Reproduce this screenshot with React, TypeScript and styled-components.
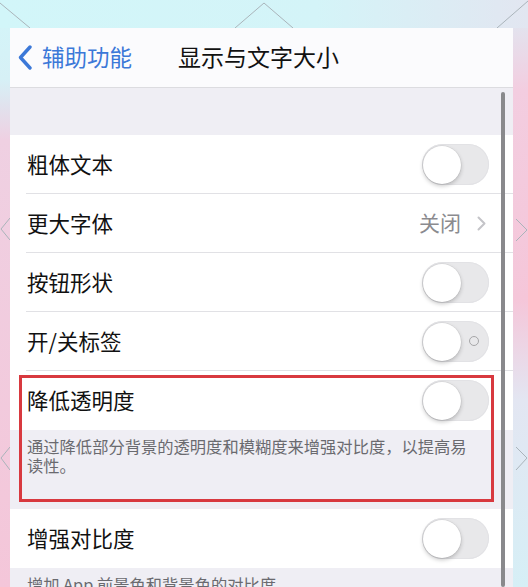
import React, { FC } from "react";
import styled, { createGlobalStyle } from "styled-components";

const GlobalStyle = createGlobalStyle`
  html, body {
    margin: 0;
    padding: 0;
  }
  body {
    font-family: "Noto Sans CJK SC", "Noto Sans", sans-serif;
  }
`;

const Page = styled.div`
  position: relative;
  width: 528px;
  height: 587px;
  overflow: hidden;
  box-sizing: border-box;
  padding: 28px 15px 0 10px;
  display: flex;
  background-color: #f4c8da;
  background-image: linear-gradient(
      180deg,
      #dcecf4 0px,
      #f3cde0 90px,
      #f5c6d9 300px,
      #e3e6f2 400px,
      #d6eff6 587px
    ),
    linear-gradient(
      180deg,
      #d3f6f9 0px,
      #d6f0f6 80px,
      #efd0e2 140px,
      #f4c6d9 587px
    );
  background-size: 20px 100%, 100% 100%;
  background-position: right top, left top;
  background-repeat: no-repeat;
`;

const TopBand = styled.div`
  position: absolute;
  left: 0;
  right: 0;
  top: 0;
  height: 28px;
  background: linear-gradient(90deg, #d2f6f9 0%, #d4f4f8 60%, #e2e6f1 100%);
`;

const Decor = styled.svg`
  position: absolute;
  inset: 0;
  pointer-events: none;
`;

const Screen = styled.div`
  position: relative;
  z-index: 1;
  flex: 1;
  display: flex;
  flex-direction: column;
  background: #efeef4;
  overflow: hidden;
`;

const NavBar = styled.div`
  height: 59px;
  flex-shrink: 0;
  display: flex;
  align-items: center;
  padding-left: 8px;
  background: #fbfbfd;
  border-bottom: 1px solid #dcdce0;
`;

const BackButton = styled.div`
  display: flex;
  align-items: center;
  gap: 10px;
  color: #3b78d8;
  font-size: 22.5px;
  span {
    margin-bottom: 3px;
  }
`;

const NavTitle = styled.div`
  margin-left: 46px;
  margin-bottom: 3px;
  font-size: 23px;
  color: #111;
`;

const SectionGap = styled.div<{ $h: number }>`
  height: ${(p) => p.$h}px;
  flex-shrink: 0;
`;

const Row = styled.div<{ $last?: boolean }>`
  position: relative;
  height: 59px;
  flex-shrink: 0;
  display: flex;
  align-items: center;
  justify-content: space-between;
  padding: 0 24px 0 17px;
  background: #fff;
  &::after {
    content: "";
    display: ${(p) => (p.$last ? "none" : "block")};
    position: absolute;
    left: 16px;
    right: 0;
    bottom: 0;
    height: 1px;
    background: #e1e1e5;
  }
`;

const Label = styled.span`
  font-size: 21.5px;
  color: #111;
  margin-bottom: 3px;
`;

const Value = styled.div`
  display: flex;
  align-items: center;
  gap: 16px;
  color: #8b8b8f;
  font-size: 21px;
  margin-right: 3px;
  span {
    margin-bottom: 3px;
  }
`;

const Track = styled.div`
  position: relative;
  width: 67px;
  height: 41px;
  border-radius: 21px;
  background: #e8e8ea;
  box-shadow: inset 0 0 0 1px #e2e2e5;
`;

const Knob = styled.div`
  position: absolute;
  left: 1px;
  top: 1.5px;
  width: 38px;
  height: 38px;
  border-radius: 50%;
  background: #fff;
  box-shadow: 0 2px 4px rgba(0, 0, 0, 0.22), 0 0 0 0.5px rgba(0, 0, 0, 0.08);
`;

const OffMark = styled.div`
  position: absolute;
  left: 47px;
  top: 15px;
  width: 8px;
  height: 8px;
  border-radius: 50%;
  border: 1.5px solid #a6a6a8;
`;

const Footer = styled.div<{ $h: number }>`
  height: ${(p) => p.$h}px;
  flex-shrink: 0;
  box-sizing: border-box;
  padding: 7px 38px 0 17px;
  font-size: 16.3px;
  line-height: 19px;
  color: #6a6a6f;
`;

const Highlight = styled.div`
  position: relative;
  display: flex;
  flex-direction: column;
  &::after {
    content: "";
    position: absolute;
    top: 4px;
    left: 9px;
    right: 19px;
    bottom: 7px;
    border: 3px solid #d8393f;
    pointer-events: none;
  }
`;

const ScrollBar = styled.div`
  position: absolute;
  z-index: 2;
  left: 491px;
  top: 64px;
  bottom: 0;
  width: 3.5px;
  border-radius: 2px;
  background: #89898c;
`;

const Switch: FC<{ labels?: boolean }> = ({ labels }) => (
  <Track>
    {labels && <OffMark />}
    <Knob />
  </Track>
);

const Chevron: FC = () => (
  <svg width="9" height="15" viewBox="0 0 9 15">
    <path d="M1.5 1.5 L7.5 7.5 L1.5 13.5" fill="none" stroke="#c4c4c8" strokeWidth="2" strokeLinecap="round" strokeLinejoin="round" />
  </svg>
);

const BackChevron: FC = () => (
  <svg width="14" height="25" viewBox="0 0 14 25">
    <path d="M12 2 L2.5 12.5 L12 23" fill="none" stroke="#3b78d8" strokeWidth="3.4" strokeLinecap="round" strokeLinejoin="round" />
  </svg>
);

const App: FC = () => {
  return (
    <Page>
      <GlobalStyle />
      <TopBand />
      <Decor width="528" height="587" viewBox="0 0 528 587">
        <g fill="none" stroke="#aab4ba" strokeWidth="1">
          <path d="M0 3 L30 28" />
          <path d="M235 28 L264 3 L293 28" />
          <path d="M497 28 L528 1" />
          <path d="M10 218 L1 229 L10 240" />
          <path d="M516 219 L527 230 L516 241" />
          <path d="M10 447 L1 458 L10 470" />
          <path d="M516 447 L527 458 L516 470" />
        </g>
      </Decor>
      <Screen>
        <NavBar>
          <BackButton>
            <BackChevron />
            <span>辅助功能</span>
          </BackButton>
          <NavTitle>显示与文字大小</NavTitle>
        </NavBar>
        <SectionGap $h={47} />
        <Row>
          <Label>粗体文本</Label>
          <Switch />
        </Row>
        <Row>
          <Label>更大字体</Label>
          <Value>
            <span>关闭</span>
            <Chevron />
          </Value>
        </Row>
        <Row>
          <Label>按钮形状</Label>
          <Switch />
        </Row>
        <Row>
          <Label>开/关标签</Label>
          <Switch labels />
        </Row>
        <Highlight>
          <Row $last>
            <Label>降低透明度</Label>
            <Switch />
          </Row>
          <Footer $h={79}>
            通过降低部分背景的透明度和模糊度来增强对比度，以提高易读性。
          </Footer>
        </Highlight>
        <Row $last>
          <Label>增强对比度</Label>
          <Switch />
        </Row>
        <Footer $h={40}>增加 App 前景色和背景色的对比度。</Footer>
        <ScrollBar />
      </Screen>
    </Page>
  );
};

export default App;
